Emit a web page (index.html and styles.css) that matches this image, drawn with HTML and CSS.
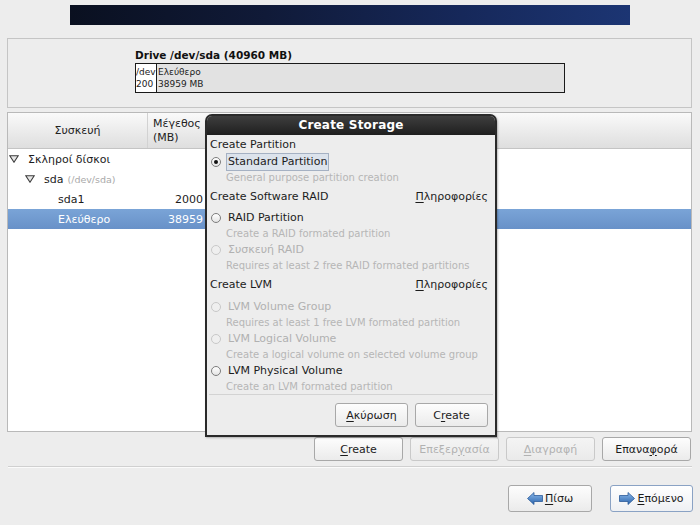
FILE: index.html
```html
<!DOCTYPE html>
<html>
<head>
<meta charset="utf-8">
<link rel="stylesheet" href="styles.css">
</head>
<body>
<div class="banner"></div>

<div class="drive-panel">
  <div class="drive-title">Drive /dev/sda (40960 MB)</div>
  <div class="drive-bar">
    <div class="seg seg-part"><span>/dev</span><span>200</span></div>
    <div class="seg seg-free"><span>Ελεύθερο</span><span>38959 MB</span></div>
  </div>
</div>

<div class="tree">
  <div class="thead">
    <div class="th th-dev">Συσκευή</div>
    <div class="th th-size">Μέγεθος<br>(MB)</div>
  </div>
  <div class="row">
    <div class="cell dev lvl0"><svg class="tri" width="10" height="8" viewBox="0 0 10 8"><polygon points="0.8,0.8 9.2,0.8 5,7.2" fill="#e6e6e6" stroke="#3a3a3a" stroke-width="1.1"/></svg>Σκληροί δίσκοι</div>
    <div class="cell size"></div>
  </div>
  <div class="row">
    <div class="cell dev lvl1"><svg class="tri" width="10" height="8" viewBox="0 0 10 8"><polygon points="0.8,0.8 9.2,0.8 5,7.2" fill="#e6e6e6" stroke="#3a3a3a" stroke-width="1.1"/></svg>sda<span class="path">(/dev/sda)</span></div>
    <div class="cell size"></div>
  </div>
  <div class="row">
    <div class="cell dev lvl2">sda1</div>
    <div class="cell size">2000</div>
  </div>
  <div class="row selected">
    <div class="cell dev lvl2">Ελεύθερο</div>
    <div class="cell size">38959</div>
  </div>
</div>

<div class="actions">
  <div class="btn"><span><u>C</u>reate</span></div>
  <div class="btn disabled"><span>Επεξερ<u>γ</u>ασία</span></div>
  <div class="btn disabled"><span><u>Δ</u>ιαγραφή</span></div>
  <div class="btn"><span>Επανα<u>φ</u>ορά</span></div>
</div>

<div class="separator"></div>

<div class="nav">
  <div class="btn nav-btn back">
    <svg width="16" height="13" viewBox="0 0 16 13"><defs><linearGradient id="ga" x1="0" y1="0" x2="0" y2="1"><stop offset="0" stop-color="#8ab8ea"/><stop offset="1" stop-color="#2a64ad"/></linearGradient></defs><path d="M0.5 6.5 L7 0.5 V3.5 H15.5 V9.5 H7 V12.5 Z" fill="url(#ga)" stroke="#2b5b99" stroke-width="0.8"/></svg>
    <span><u>Π</u>ίσω</span>
  </div>
  <div class="btn nav-btn next">
    <svg width="16" height="13" viewBox="0 0 16 13"><defs><linearGradient id="gb" x1="0" y1="0" x2="0" y2="1"><stop offset="0" stop-color="#8ab8ea"/><stop offset="1" stop-color="#2a64ad"/></linearGradient></defs><path d="M15.5 6.5 L9 0.5 V3.5 H0.5 V9.5 H9 V12.5 Z" fill="url(#gb)" stroke="#2b5b99" stroke-width="0.8"/></svg>
    <span><u>Ε</u>πόμενο</span>
  </div>
</div>

<div class="dialog">
  <div class="dlg-title">Create Storage</div>
  <div class="dlg-body">
    <div class="sec first"><span>Create Partition</span></div>
    <div class="opt">
      <div class="radio-row"><span class="radio on"></span><span class="label focus">Standard Partition</span></div>
      <div class="desc">General purpose partition creation</div>
    </div>

    <div class="sec"><span>Create Software RAID</span><span class="info"><u>Π</u>ληροφορίες</span></div>
    <div class="opt">
      <div class="radio-row"><span class="radio"></span><span class="label">RAID Partition</span></div>
      <div class="desc">Create a RAID formated partition</div>
    </div>
    <div class="opt off">
      <div class="radio-row"><span class="radio"></span><span class="label">Συσκευή RAID</span></div>
      <div class="desc">Requires at least 2 free RAID formated partitions</div>
    </div>

    <div class="sec lvm"><span>Create LVM</span><span class="info"><u>Π</u>ληροφορίες</span></div>
    <div class="opt off">
      <div class="radio-row"><span class="radio"></span><span class="label">LVM Volume Group</span></div>
      <div class="desc">Requires at least 1 free LVM formated partition</div>
    </div>
    <div class="opt off">
      <div class="radio-row"><span class="radio"></span><span class="label">LVM Logical Volume</span></div>
      <div class="desc">Create a logical volume on selected volume group</div>
    </div>
    <div class="opt">
      <div class="radio-row"><span class="radio"></span><span class="label">LVM Physical Volume</span></div>
      <div class="desc">Create an LVM formated partition</div>
    </div>

    <div class="dlg-sep"></div>
    <div class="dlg-actions">
      <div class="btn dbtn"><span><u>Α</u>κύρωση</span></div>
      <div class="btn dbtn"><span>C<u>r</u>eate</span></div>
    </div>
  </div>
</div>
</body>
</html>
```

FILE: styles.css
```css
* { box-sizing: border-box; }

body {
  margin: 0;
  width: 700px;
  height: 525px;
  overflow: hidden;
  position: relative;
  background: #ededed;
  font-family: "DejaVu Sans", "Noto Sans", sans-serif;
  font-size: 11px;
  color: #1c1c1c;
}

u { text-decoration: underline; text-underline-offset: 2px; }

.banner {
  margin: 5px 0 0 70px;
  width: 560px;
  height: 20px;
  background: linear-gradient(90deg, #0a1020 0%, #101a38 35%, #16285a 70%, #1c3573 100%);
}

.drive-panel {
  margin: 13px 0 0 7px;
  width: 685px;
  height: 70px;
  border: 1px solid #c5c5c5;
  padding: 9px 0 0 127px;
}

.drive-title {
  height: 14px;
  line-height: 14px;
  font-weight: bold;
  font-size: 10.5px;
  color: #111;
}

.drive-bar {
  margin-top: 1px;
  width: 430px;
  height: 30px;
  border: 1px solid #1a1a1a;
  display: flex;
}

.seg {
  display: flex;
  flex-direction: column;
  padding-top: 2px;
  font-size: 9px;
  line-height: 12px;
  overflow: hidden;
  white-space: nowrap;
  color: #222;
}

.seg-part {
  width: 21px;
  background: #fff;
  border-right: 1px solid #1a1a1a;
}

.seg-free {
  flex: 1;
  padding-left: 1px;
  background: #e2e2e2;
}

.tree {
  margin: 4px 0 0 7px;
  width: 685px;
  height: 320px;
  border: 1px solid #b9b9b9;
  background: #fff;
  overflow: hidden;
}

.thead {
  height: 36px;
  display: flex;
  background: linear-gradient(#fafafa, #e9e9e9 60%, #dedede);
  border-bottom: 1px solid #c4c4c4;
}

.th {
  display: flex;
  align-items: center;
  line-height: 14px;
  color: #222;
}

.th-dev {
  width: 140px;
  justify-content: center;
  border-right: 1px solid #d2d2d2;
}

.th-size {
  padding-left: 5px;
}

.row {
  height: 20px;
  display: flex;
  align-items: center;
}

.row.selected {
  background: linear-gradient(#7aa4d7, #6891c8);
  color: #fff;
}

.cell.dev {
  width: 140px;
  display: flex;
  align-items: center;
  white-space: nowrap;
}

.cell.size {
  width: 60px;
  text-align: right;
  padding-right: 5px;
}

.lvl0 { padding-left: 1px; }
.lvl1 { padding-left: 17px; }
.lvl2 { padding-left: 50px; }

.tri { margin-right: 9px; flex: none; }

.path {
  margin-left: 4px;
  font-size: 9.5px;
  color: #a9a9a9;
}

.actions {
  margin-top: 5px;
  display: flex;
  justify-content: flex-end;
  gap: 7px;
  padding-right: 9px;
}

.btn {
  height: 24px;
  width: 89px;
  display: flex;
  align-items: center;
  justify-content: center;
  background: linear-gradient(#fdfdfd, #ebebeb);
  border: 1px solid #a8a8a8;
  border-radius: 3px;
  color: #1c1c1c;
  white-space: nowrap;
}

.btn.disabled {
  color: #b2b2b2;
  border-color: #c9c9c9;
  background: linear-gradient(#f4f4f4, #eaeaea);
}

.separator {
  margin: 5px 8px 0 8px;
  border-top: 1px solid #d0d0d0;
  border-bottom: 1px solid #fbfbfb;
}

.nav {
  margin-top: 17px;
  display: flex;
  justify-content: flex-end;
  gap: 18px;
  padding-right: 7px;
}

.nav-btn {
  height: 27px;
  gap: 2px;
}

.nav-btn.back { width: 84px; }
.nav-btn.next {
  width: 83px;
  border-color: #8aa2c4;
  background: linear-gradient(#ffffff, #eef0f3);
}

/* dialog overlay */
.dialog {
  position: absolute;
  left: 205px;
  top: 114px;
  width: 292px;
  border: 2px solid #2a2a2a;
  border-radius: 7px 7px 0 0;
  background: #ededed;
  overflow: hidden;
  box-shadow: 1px 1px 2px rgba(0,0,0,0.25);
}

.dlg-title {
  height: 19px;
  line-height: 19px;
  text-align: center;
  font-weight: bold;
  font-size: 12px;
  color: #fff;
  background: linear-gradient(#3e3e3e, #1f1f1f);
  letter-spacing: 0.2px;
}

.dlg-body {
  padding: 3px 7px 8px 3px;
}

.sec {
  height: 14px;
  line-height: 14px;
  display: flex;
  justify-content: space-between;
  margin: 5px 0 5px 0;
}

.sec.first { margin: 0 0 1px 0; }
.sec.lvm { margin-bottom: 6px; }

.opt { height: 32px; }

.radio-row {
  height: 18px;
  display: flex;
  align-items: center;
}

.radio {
  width: 10px;
  height: 10px;
  margin: 0 5px 0 1px;
  border-radius: 50%;
  border: 1px solid #7d7d7d;
  background: linear-gradient(#ffffff, #e4e4e4);
  display: flex;
  align-items: center;
  justify-content: center;
  flex: none;
}

.radio.on::after {
  content: "";
  width: 4px;
  height: 4px;
  border-radius: 50%;
  background: #111;
}

.label {
  padding: 0 1px;
  line-height: 16px;
  border: 1px solid transparent;
}

.label.focus {
  background: #dce3ec;
  border-color: #a5b1c3;
}

.desc {
  height: 14px;
  line-height: 14px;
  padding-left: 16px;
  font-size: 10px;
  color: #b6b6b6;
  white-space: nowrap;
}

.opt.off .label { color: #b1b1b1; }
.opt.off .radio {
  border-color: #c8c8c8;
  background: #efefef;
}

.dlg-sep {
  margin: 0 -5px 0 -1px;
  border-top: 1px solid #d3d3d3;
}

.dlg-actions {
  margin-top: 8px;
  display: flex;
  justify-content: flex-end;
  gap: 7px;
  padding-right: 0;
}

.dbtn { width: 73px; }
```
